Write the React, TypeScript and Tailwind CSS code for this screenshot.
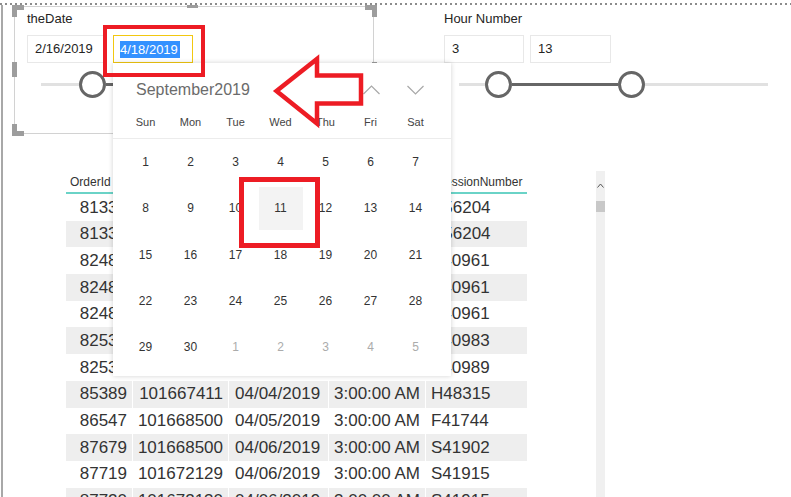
import React from "react"

type Row = [string, string, string, string, string]

const rows: Row[] = [
  ["81336", "101650112", "03/28/2019", "3:00:00 AM", "H56204"],
  ["81337", "101650112", "03/28/2019", "3:00:00 AM", "H56204"],
  ["82481", "101655409", "03/30/2019", "3:00:00 AM", "S40961"],
  ["82482", "101655409", "03/30/2019", "3:00:00 AM", "S40961"],
  ["82483", "101655409", "03/30/2019", "3:00:00 AM", "S40961"],
  ["82531", "101655877", "03/31/2019", "3:00:00 AM", "S40983"],
  ["82532", "101655890", "03/31/2019", "3:00:00 AM", "S40989"],
  ["85389", "101667411", "04/04/2019", "3:00:00 AM", "H48315"],
  ["86547", "101668500", "04/05/2019", "3:00:00 AM", "F41744"],
  ["87679", "101668500", "04/06/2019", "3:00:00 AM", "S41902"],
  ["87719", "101672129", "04/06/2019", "3:00:00 AM", "S41915"],
  ["87720", "101672130", "04/06/2019", "3:00:00 AM", "S41915"],
]

// cell classes per column: width + alignment
const cellCls = [
  "w-[67px] justify-end pr-[5px] border-r border-white",
  "w-[96px] justify-end pr-[5px] border-r border-white",
  "w-[100px] pl-[6px] border-r border-white",
  "w-[97px] pl-[5px] border-r border-white",
  "w-[101px] pl-[5px]",
]

const headerCls = ["w-[67px] pl-[4px]", "w-[96px] pl-[4px]", "w-[100px] pl-[4px]", "w-[97px] pl-[4px]", "w-[101px] pl-[11px]"]
const headers = ["OrderId", "CustomerId", "OrderDate", "OrderTime", "SessionNumber"]

const weekDays = ["Sun", "Mon", "Tue", "Wed", "Thu", "Fri", "Sat"]

// September 2019 starts on a Sunday, 5 rows shown
const days: { d: number; other?: boolean }[] = [
  ...Array.from({ length: 30 }, (_, i) => ({ d: i + 1 })),
  ...[1, 2, 3, 4, 5].map((d) => ({ d, other: true })),
]

function Handle({ className }: { className: string }) {
  return <div className={`absolute bg-[#9d9d9d] ${className}`} />
}

function Thumb() {
  return <div className="h-[27px] w-[27px] shrink-0 rounded-full border-[3px] border-[#666] bg-white" />
}

function Chevron({ up }: { up?: boolean }) {
  return (
    <svg width="17" height="10" viewBox="0 0 17 10" className="block">
      <polyline
        points={up ? "0.5,9 8.5,1 16.5,9" : "0.5,1 8.5,9 16.5,1"}
        fill="none"
        stroke="#a8a8a8"
        strokeWidth="1.2"
      />
    </svg>
  )
}

function Calendar() {
  return (
    <div className="absolute left-[113px] top-[63px] h-[313px] w-[338px] bg-white shadow-[0_0_5px_rgba(0,0,0,0.18)]">
      <div className="flex h-[53px] items-center pl-[23px] pr-[27px]">
        <span className="text-[16px] leading-none text-[#6b6b6b]">September2019</span>
        <div className="ml-auto flex items-center gap-[27px]">
          <Chevron up />
          <Chevron />
        </div>
      </div>
      <div className="border-b border-[#ececec] pb-[10px] pl-[10px]">
        <div className="grid h-[12px] grid-cols-[repeat(7,45px)] items-center">
          {weekDays.map((w) => (
            <span key={w} className="text-center text-[11px] leading-none text-[#444]">
              {w}
            </span>
          ))}
        </div>
      </div>
      <div className="grid grid-cols-[repeat(7,45px)] pl-[10px]">
        {days.map((c, i) => (
          <div key={i} className="flex h-[46.3px] items-center justify-center">
            <div
              className={`flex h-[43px] w-[44px] items-center justify-center text-[12px] ${
                c.other ? "text-[#ababab]" : "text-[#333]"
              } ${!c.other && c.d === 11 ? "bg-[#f3f3f3]" : ""}`}
            >
              {c.d}
            </div>
          </div>
        ))}
      </div>
    </div>
  )
}

export default function App() {
  return (
    <div className="relative h-[497px] w-[791px] overflow-hidden bg-white font-['Liberation_Sans',Arial,sans-serif] text-[#252423]">
      <div className="h-[3px]" />
      <div className="h-[2px] bg-[repeating-linear-gradient(to_right,#8c8c8c_0px,#8c8c8c_2px,transparent_2px,transparent_5px)]" />
      <div className="ml-[1px] h-[492px] border-l-2 border-[#a8a8a8]">
        {/* slicers */}
        <div className="flex items-start pl-[11px] pt-[1px]">
          <div className="relative h-[128px] w-[360px] border border-[#d2d2d2] pl-[12px] pt-[4px]">
            <div className="text-[13px] leading-[16px]">theDate</div>
            <div className="mt-[8px] flex gap-[6px] text-[13px]">
              <div className="flex h-[28px] w-[80px] items-center border border-[#e8e8e8] pl-[7px]">2/16/2019</div>
              <div className="flex h-[28px] w-[80px] items-center border border-[#f2c811] pl-[6px]">
                <span className="bg-[#3391ff] pr-[2px] leading-[17px] text-white">4/18/2019</span>
              </div>
            </div>
            <div className="ml-[14px] mt-[8px] flex h-[27px] w-[330px] items-center">
              <div className="h-[3px] w-[38px] bg-[#e1e1e1]" />
              <Thumb />
              <div className="h-[3px] w-[200px] bg-[#666]" />
              <Thumb />
              <div className="h-[3px] flex-1 bg-[#e1e1e1]" />
            </div>

            <Handle className="left-[-3px] top-[-2px] h-[5px] w-[12px]" />
            <Handle className="left-[-3px] top-[-2px] h-[12px] w-[5px]" />
            <Handle className="left-[172px] top-[-2px] h-[3px] w-[11px]" />
            <Handle className="left-[350px] top-[-2px] h-[5px] w-[12px]" />
            <Handle className="left-[357px] top-[-2px] h-[12px] w-[5px]" />
            <Handle className="left-[-3px] top-[55px] h-[15px] w-[5px]" />
            <Handle className="left-[357px] top-[55px] h-[15px] w-[5px]" />
            <Handle className="bottom-[-3px] left-[-3px] h-[12px] w-[5px]" />
            <Handle className="bottom-[-3px] left-[-3px] h-[5px] w-[12px]" />
          </div>

          <div className="ml-[70px] w-[324px] pt-[5px]">
            <div className="text-[13px] leading-[16px]">Hour Number</div>
            <div className="mt-[8px] flex gap-[6px] text-[13px]">
              <div className="flex h-[28px] w-[80px] items-center border border-[#e8e8e8] pl-[7px]">3</div>
              <div className="flex h-[28px] w-[81px] items-center border border-[#e8e8e8] pl-[7px]">13</div>
            </div>
            <div className="ml-[15px] mt-[8px] flex h-[27px] w-[309px] items-center">
              <div className="h-[3px] w-[26px] bg-[#e1e1e1]" />
              <Thumb />
              <div className="h-[3px] w-[106px] bg-[#666]" />
              <Thumb />
              <div className="h-[3px] flex-1 bg-[#e1e1e1]" />
            </div>
          </div>
        </div>

        {/* table */}
        <div className="mt-[37px] flex items-start pl-[63px]">
          <div className="w-[461px] text-[#333]">
            <div className="flex h-[23px] items-center border-b-2 border-[#6ad3c7] text-[12px]">
              {headers.map((h, i) => (
                <div key={h} className={headerCls[i]}>
                  {h}
                </div>
              ))}
            </div>
            {rows.map((r, ri) => (
              <div key={ri} className={`flex h-[26.7px] text-[17px] ${ri % 2 ? "bg-[#eeeeee]" : "bg-white"}`}>
                {r.map((v, ci) => (
                  <div key={ci} className={`flex items-center ${cellCls[ci]}`}>
                    {v}
                  </div>
                ))}
              </div>
            ))}
          </div>
          <div className="ml-[69px] flex h-[326px] w-[9px] flex-col items-center bg-[#f0f0f0] pt-[12px]">
            <svg width="7" height="5" viewBox="0 0 7 5" className="block">
              <polyline points="0.5,4.5 3.5,1 6.5,4.5" fill="none" stroke="#555" strokeWidth="1" />
            </svg>
            <div className="mt-[13px] h-[11px] w-full bg-[#c8c8c8]" />
          </div>
        </div>
      </div>

      <Calendar />

      <div className="absolute left-[103px] top-[25px] h-[52px] w-[102px] border-[4px] border-[#ed1c24]" />
      <div className="absolute left-[239px] top-[177px] h-[71px] w-[81px] border-[5px] border-[#ed1c24]" />

      <svg className="pointer-events-none absolute left-0 top-0" width="791" height="497">
        <polygon
          points="276.5,91 317,59 317,75.5 361,75.5 361,103.5 317,103.5 317,123.5"
          fill="none"
          stroke="#ed1c24"
          strokeWidth="4.5"
        />
      </svg>
    </div>
  )
}
